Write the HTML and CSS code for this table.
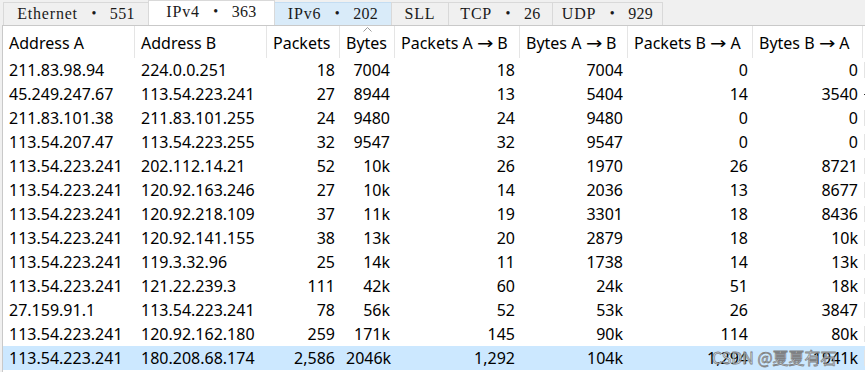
FILE: index.html
```html
<!DOCTYPE html>
<html>
<head>
<meta charset="utf-8">
<link rel="stylesheet" href="styles.css">
</head>
<body>
<div class="window">
  <div class="tabbar">
    <div class="tab tab-eth"><span class="lbl">Ethernet</span><span class="dot">•</span><span class="cnt">551</span></div>
    <div class="tab tab-ipv4 selected"><span class="lbl">IPv4</span><span class="dot">•</span><span class="cnt">363</span></div>
    <div class="tab tab-ipv6 hover"><span class="lbl">IPv6</span><span class="dot">•</span><span class="cnt">202</span></div>
    <div class="tab tab-sll"><span class="lbl">SLL</span></div>
    <div class="tab tab-tcp"><span class="lbl">TCP</span><span class="dot">•</span><span class="cnt">26</span></div>
    <div class="tab tab-udp"><span class="lbl">UDP</span><span class="dot">•</span><span class="cnt">929</span></div>
  </div>
  <div class="frame">
    <div class="row head">
      <div class="c">Address A</div>
      <div class="c">Address B</div>
      <div class="c">Packets</div>
      <div class="c sorted">Bytes<svg class="caret" width="9" height="5" viewBox="0 0 9 5"><polyline points="0.5,4.5 4.5,0.5 8.5,4.5" fill="none" stroke="#9a9a9a" stroke-width="1"/></svg></div>
      <div class="c">Packets A <span class="arr">→</span> B</div>
      <div class="c">Bytes A <span class="arr">→</span> B</div>
      <div class="c">Packets B <span class="arr">→</span> A</div>
      <div class="c">Bytes B <span class="arr">→</span> A</div>
      <div class="c edgehead"></div>
    </div>
    <div class="row"><div class="c">211.83.98.94</div><div class="c">224.0.0.251</div><div class="c n">18</div><div class="c n">7004</div><div class="c n">18</div><div class="c n">7004</div><div class="c n">0</div><div class="c n">0</div><div class="c e"><span class="edge"></span></div></div>
    <div class="row"><div class="c">45.249.247.67</div><div class="c">113.54.223.241</div><div class="c n">27</div><div class="c n">8944</div><div class="c n">13</div><div class="c n">5404</div><div class="c n">14</div><div class="c n">3540</div><div class="c e"><span class="edge dark"></span></div></div>
    <div class="row"><div class="c">211.83.101.38</div><div class="c">211.83.101.255</div><div class="c n">24</div><div class="c n">9480</div><div class="c n">24</div><div class="c n">9480</div><div class="c n">0</div><div class="c n">0</div><div class="c e"><span class="edge"></span></div></div>
    <div class="row"><div class="c">113.54.207.47</div><div class="c">113.54.223.255</div><div class="c n">32</div><div class="c n">9547</div><div class="c n">32</div><div class="c n">9547</div><div class="c n">0</div><div class="c n">0</div><div class="c e"><span class="edge"></span></div></div>
    <div class="row"><div class="c">113.54.223.241</div><div class="c">202.112.14.21</div><div class="c n">52</div><div class="c n">10k</div><div class="c n">26</div><div class="c n">1970</div><div class="c n">26</div><div class="c n">8721</div><div class="c e"><span class="edge"></span></div></div>
    <div class="row"><div class="c">113.54.223.241</div><div class="c">120.92.163.246</div><div class="c n">27</div><div class="c n">10k</div><div class="c n">14</div><div class="c n">2036</div><div class="c n">13</div><div class="c n">8677</div><div class="c e"><span class="edge"></span></div></div>
    <div class="row"><div class="c">113.54.223.241</div><div class="c">120.92.218.109</div><div class="c n">37</div><div class="c n">11k</div><div class="c n">19</div><div class="c n">3301</div><div class="c n">18</div><div class="c n">8436</div><div class="c e"><span class="edge"></span></div></div>
    <div class="row"><div class="c">113.54.223.241</div><div class="c">120.92.141.155</div><div class="c n">38</div><div class="c n">13k</div><div class="c n">20</div><div class="c n">2879</div><div class="c n">18</div><div class="c n">10k</div><div class="c e"><span class="edge"></span></div></div>
    <div class="row"><div class="c">113.54.223.241</div><div class="c">119.3.32.96</div><div class="c n">25</div><div class="c n">14k</div><div class="c n">11</div><div class="c n">1738</div><div class="c n">14</div><div class="c n">13k</div><div class="c e"><span class="edge"></span></div></div>
    <div class="row"><div class="c">113.54.223.241</div><div class="c">121.22.239.3</div><div class="c n">111</div><div class="c n">42k</div><div class="c n">60</div><div class="c n">24k</div><div class="c n">51</div><div class="c n">18k</div><div class="c e"><span class="edge"></span></div></div>
    <div class="row"><div class="c">27.159.91.1</div><div class="c">113.54.223.241</div><div class="c n">78</div><div class="c n">56k</div><div class="c n">52</div><div class="c n">53k</div><div class="c n">26</div><div class="c n">3847</div><div class="c e"><span class="edge"></span></div></div>
    <div class="row"><div class="c">113.54.223.241</div><div class="c">120.92.162.180</div><div class="c n">259</div><div class="c n">171k</div><div class="c n">145</div><div class="c n">90k</div><div class="c n">114</div><div class="c n">80k</div><div class="c e"><span class="edge"></span></div></div>
    <div class="row sel"><div class="c">113.54.223.241</div><div class="c">180.208.68.174</div><div class="c n">2,586</div><div class="c n">2046k</div><div class="c n">1,292</div><div class="c n">104k</div><div class="c n">1,294</div><div class="c n">1941k</div><div class="c e"><span class="edge"></span></div></div>
  </div>
  <div class="watermark">CSDN @夏夏有石</div>
</div>
</body>
</html>
```
FILE: styles.css
```css
html, body {
  margin: 0;
  padding: 0;
  background: #f0f0f0;
}
.window {
  position: relative;
  width: 865px;
  height: 372px;
  overflow: hidden;
  background: #f0f0f0;
}
.tabbar {
  display: flex;
  align-items: flex-end;
  height: 25px;
  padding-left: 3px;
  box-sizing: border-box;
}
.tab {
  display: flex;
  align-items: center;
  justify-content: center;
  height: 23px;
  box-sizing: border-box;
  padding: 0 0 1px;
  margin-right: -1px;
  border: 1px solid #d9d9d9;
  border-bottom: none;
  background: #f0f0f0;
  font-family: "Liberation Serif", serif;
  font-size: 16px;
  color: #1a1a1a;
  white-space: nowrap;
}
.tab-eth { width: 146px; }
.tab-ipv4 { width: 127px; }
.tab-ipv6 { width: 118px; }
.tab-sll { width: 58px; }
.tab-tcp { width: 105px; }
.tab-udp { width: 111px; }
.tab .lbl {
  letter-spacing: 0.8px;
}
.tab .dot {
  width: 32px;
  text-align: center;
  font-size: 14px;
}
.tab .cnt {
  letter-spacing: 0.3px;
}
.tab.selected {
  height: 25px;
  padding-bottom: 3px;
  background: #ffffff;
  border-color: #d9d9d9;
  position: relative;
  z-index: 1;
}
.tab.hover {
  background: #d9ebf9;
  border-color: #c4ddf2;
}
.frame {
  margin-left: 2px;
  border-top: 1px solid #c9c9c9;
  border-left: 1px solid #c9c9c9;
  background: #ffffff;
  height: 347px;
  overflow: hidden;
  font-family: "Noto Sans", sans-serif;
  font-size: 16px;
  color: #000;
}
.row {
  display: grid;
  grid-template-columns: 132px 132px 73px 55px 125px 108px 125px 110px 40px;
  height: 24px;
  line-height: 24px;
  white-space: nowrap;
}
.row.head {
  height: 32px;
  line-height: 32px;
}
.c {
  box-sizing: border-box;
  padding: 0 5px 0 6px;
  overflow: hidden;
}
.head .c {
  border-right: 1px solid #e5e5e5;
  padding-top: 1px;
}
.head .c.edgehead {
  border-right: none;
}
.arr {
  font-family: "DejaVu Sans", sans-serif;
  font-size: 17px;
  display: inline-block;
  transform: scaleX(1.15);
  margin: 0 1px;
}
.c.n {
  text-align: right;
}
.sorted {
  position: relative;
}
.caret {
  position: absolute;
  left: 23px;
  top: 1px;
}
.c.e {
  padding: 0;
  display: flex;
  align-items: center;
}
.edge {
  display: block;
  width: 30px;
  height: 16px;
  margin-left: 1px;
  background: #e4e4e4;
}
.edge.dark {
  width: 3px;
  height: 1px;
  background: #333;
}
.row.sel {
  background: #cce8ff;
}
.watermark {
  position: absolute;
  left: 712px;
  top: 345px;
  font-family: "Noto Sans CJK SC", "Noto Sans", sans-serif;
  font-size: 16px;
  line-height: 24px;
  color: rgba(255, 255, 255, 0.7);
  -webkit-text-stroke: 0.8px rgba(110, 110, 110, 0.85);
  white-space: nowrap;
}
```
